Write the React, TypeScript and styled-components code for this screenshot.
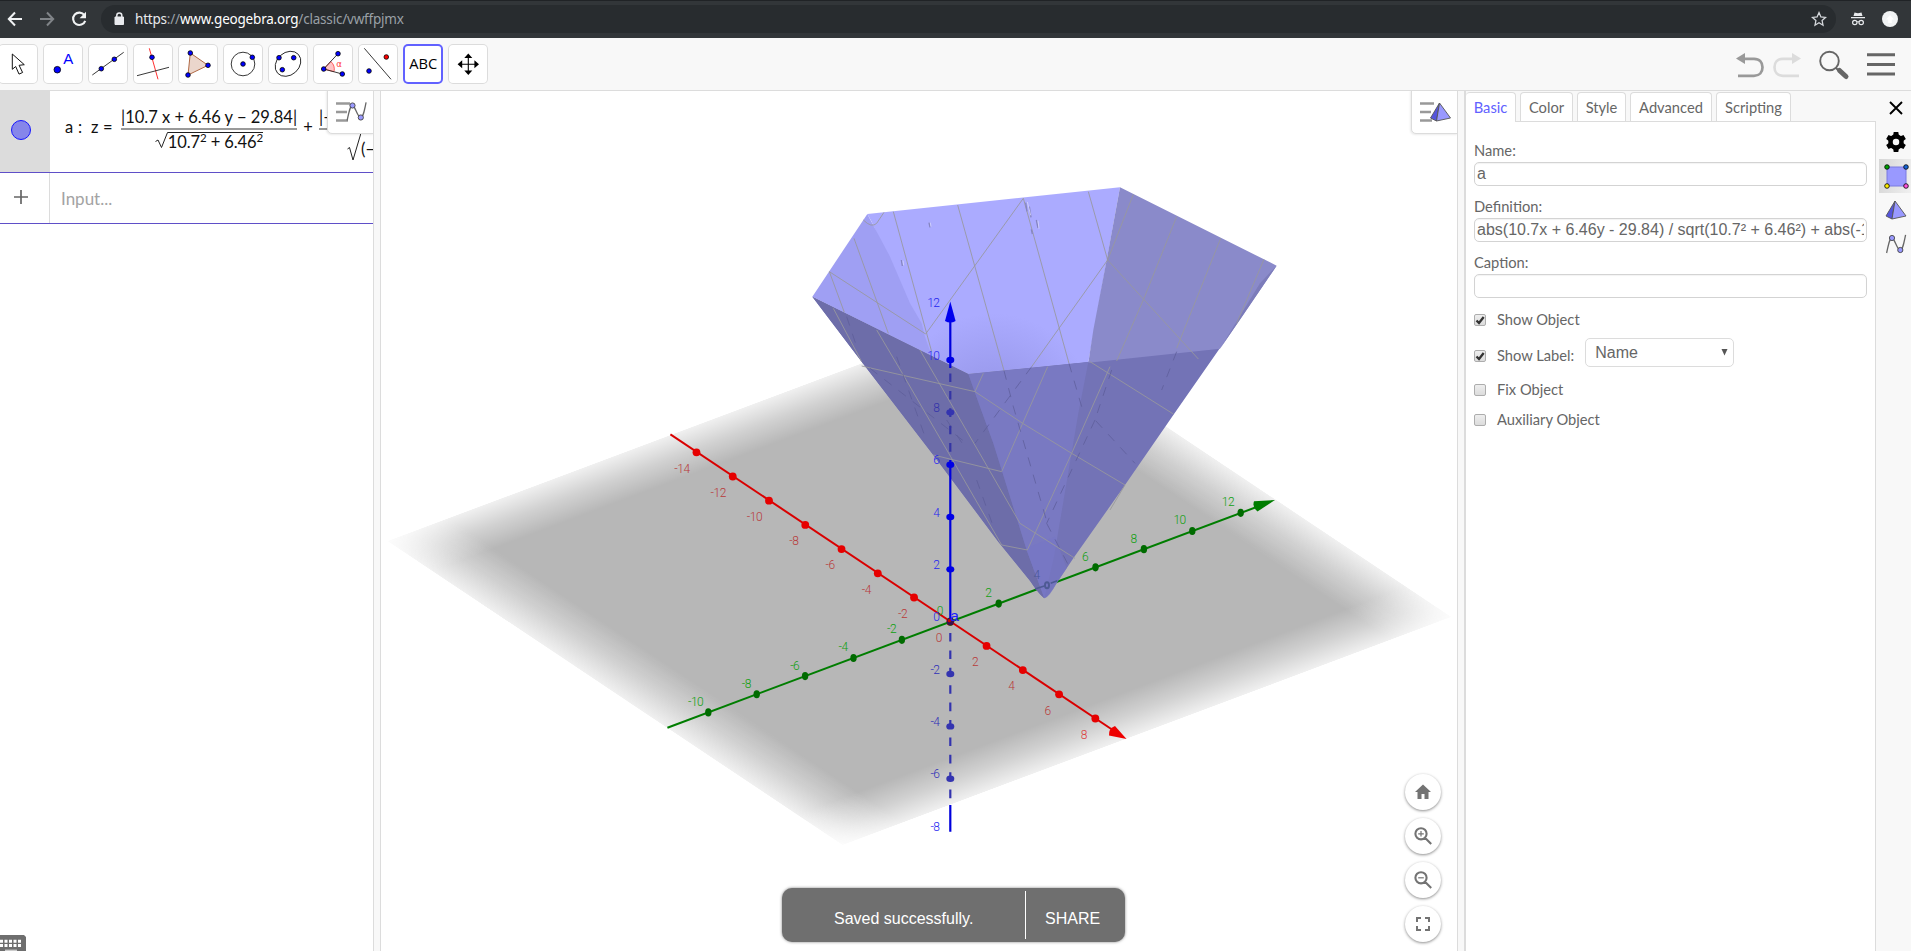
import React from "react";
import styled, { createGlobalStyle } from "styled-components";

const Global = createGlobalStyle`
  *, *::before, *::after { box-sizing: border-box; }
  html, body, #root { margin: 0; height: 100%; }
  body { overflow: hidden; background: #fff; font-family: Lato, "Liberation Sans", sans-serif; color: #666; }
  svg { display: block; }
`;

const Page = styled.div`
  display: flex;
  flex-direction: column;
  width: 1911px;
  height: 951px;
  overflow: hidden;
`;

/* Browser bar */
const BrowserBar = styled.header`
  display: flex;
  align-items: center;
  flex: none;
  height: 38px;
  padding: 0 12px 1px 7px;
  background: #323639;
  border-top: 1px solid #202326;
`;
const NavIcons = styled.div`
  display: flex;
  gap: 16px;
  width: 94px;
`;
const UrlPill = styled.div`
  display: flex;
  align-items: center;
  width: 1735px;
  height: 28px;
  padding: 0 9px 0 11px;
  border-radius: 14px;
  background: #282c2f;
`;
const UrlText = styled.span`
  flex: 1;
  margin-left: 9px;
  font: 13.5px/20px "Noto Sans", sans-serif;
  letter-spacing: -0.2px;
  color: #9aa0a6;
`;
const UrlHost = styled.span`
  color: #fff;
`;
const UrlScheme = styled.span`
  color: #e8eaed;
`;
const BrowserIcons = styled.div`
  display: flex;
  align-items: center;
  justify-content: space-between;
  width: 48px;
  margin-left: 14px;
`;

/* Toolbar */
const Toolbar = styled.nav`
  display: flex;
  justify-content: space-between;
  flex: none;
  height: 53px;
  padding: 6px 15px 0 0;
  background: #f8f8f8;
  border-bottom: 1px solid #dcdcdc;
`;
const ToolList = styled.div`
  display: flex;
  gap: 5px;
  margin-left: -2px;
`;
const ToolButton = styled.button<{ $active?: boolean }>`
  width: 40px;
  height: 40px;
  padding: 0;
  border: 0;
  border-radius: 5px;
  background: #fff;
  box-shadow: inset 0 0 0 ${(p) => (p.$active ? "2px #6161ff" : "1px #dcdcdc")};
`;
const ToolActions = styled.div`
  display: flex;
  align-items: center;
  height: 42px;
`;

/* Main area */
const Main = styled.main`
  display: flex;
  flex: 1;
  min-height: 0;
`;
const AlgebraView = styled.section`
  position: relative;
  display: flex;
  flex-direction: column;
  width: 373px;
  background: #fff;
  overflow: hidden;
`;
const AlgebraRow = styled.div<{ $height: number }>`
  display: flex;
  height: ${(p) => p.$height}px;
  border-bottom: 1px solid #5f4fc8;
`;
const Marble = styled.div<{ $filled?: boolean }>`
  flex: none;
  width: 50px;
  padding-left: 10px;
  padding-top: ${(p) => (p.$filled ? 28 : 13)}px;
  background: ${(p) => (p.$filled ? "#dcdcdc" : "#fff")};
  border-right: 1px solid #dcdcdc;
`;
const Formula = styled.div`
  display: flex;
  align-items: flex-start;
  padding: 19px 0 0 15px;
  font: 16.5px/22px Lato, sans-serif;
  color: #111;
  white-space: nowrap;
`;
const Term = styled.span<{ $width: number; $center?: boolean }>`
  flex: none;
  width: ${(p) => p.$width}px;
  padding-top: 6px;
  text-align: ${(p) => (p.$center ? "center" : "left")};
`;
const Fraction = styled.span<{ $width: number; $align?: string }>`
  display: flex;
  flex-direction: column;
  align-items: ${(p) => p.$align || "center"};
  flex: none;
  width: ${(p) => p.$width}px;
`;
const Numerator = styled.span<{ $start?: boolean }>`
  height: 20px;
  width: 100%;
  border-bottom: 2px solid #999;
  text-align: ${(p) => (p.$start ? "left" : "center")};
  line-height: 14px;
`;
const Root = styled.span`
  display: flex;
  margin-top: 2px;
`;
const Radicand = styled.span`
  height: 20px;
  border-top: 1px solid #222;
  line-height: 18px;
  letter-spacing: -0.1px;
`;
const Power = styled.sup`
  font-size: 11.5px;
  line-height: 0;
  vertical-align: 6px;
`;
const InputHint = styled.span`
  padding: 14px 0 0 11px;
  font: 17px/24px Lato, sans-serif;
  color: #a3a3a3;
`;
const StyleToggle = styled.button`
  position: absolute;
  top: -1px;
  right: -1px;
  width: 47px;
  height: 44px;
  padding: 0;
  background: #fff;
  border: 1px solid #dcdcdc;
  border-radius: 0 0 0 5px;
  box-shadow: -1px 1px 2px rgba(0, 0, 0, 0.08);
`;
const KeyboardButton = styled.div`
  position: absolute;
  left: 0;
  bottom: 0;
`;
const Splitter = styled.div<{ $end: number }>`
  flex: none;
  width: ${(p) => 7 + p.$end}px;
  background: #f8f8f8;
  border-left: 1px solid #dcdcdc;
  border-right: ${(p) => p.$end}px solid #dcdcdc;
`;

const GraphicsView = styled.section`
  position: relative;
  width: 1076px;
  background: #fff;
  overflow: hidden;
`;
const ZoomButtons = styled.div`
  position: absolute;
  right: 16px;
  bottom: 9px;
  display: flex;
  flex-direction: column;
  gap: 8px;
`;
const RoundButton = styled.button`
  display: flex;
  align-items: center;
  justify-content: center;
  width: 36px;
  height: 36px;
  padding: 0;
  border: 0;
  border-radius: 50%;
  background: #fff;
  box-shadow: 0 1px 3px rgba(0, 0, 0, 0.45);
`;
const Snackbar = styled.div`
  position: absolute;
  left: 401px;
  bottom: 9px;
  display: flex;
  align-items: center;
  width: 343px;
  height: 54px;
  border-radius: 10px;
  background: #6f6f6f;
  box-shadow: 0 0 3px rgba(0, 0, 0, 0.5);
  color: #fff;
  font: 16px/18px "Liberation Sans", sans-serif;
`;
const SnackMessage = styled.span`
  width: 244px;
  height: 48px;
  padding: 19px 0 0 52px;
  border-right: 1px solid #fff;
`;
const SnackAction = styled.span`
  padding: 8px 0 0 19px;
`;

/* Properties */
const Properties = styled.aside`
  display: flex;
  flex: 1;
  background: #f8f8f8;
`;
const PropertyColumn = styled.div`
  display: flex;
  flex-direction: column;
  width: 410px;
`;
const Tabs = styled.div`
  display: flex;
  gap: 4px;
  height: 31px;
  padding-top: 1px;
  margin-bottom: -1px;
`;
const Tab = styled.div<{ $width: number; $active?: boolean }>`
  position: relative;
  width: ${(p) => p.$width}px;
  height: ${(p) => (p.$active ? 30 : 29)}px;
  border: 1px solid #dcdcdc;
  border-bottom: 0;
  border-left-width: ${(p) => (p.$active ? 0 : 1)}px;
  border-radius: 4px 4px 0 0;
  background: #fff;
  color: ${(p) => (p.$active ? "#6161ff" : "#666")};
  font-size: 14.7px;
  line-height: 28px;
  text-align: center;
`;
const PropertyForm = styled.div`
  flex: 1;
  display: flex;
  flex-direction: column;
  background: #fff;
  border-top: 1px solid #dcdcdc;
  border-right: 1px solid #dcdcdc;
  padding: 17px 8px 0 8px;
  font-size: 14.7px;
`;
const Field = styled.label`
  display: flex;
  flex-direction: column;
  height: 56px;
  line-height: 22px;
`;
const FieldBox = styled.span`
  height: 24px;
  margin-top: 1px;
  border: 1px solid #d3d3d3;
  border-radius: 5px;
  padding: 0 2px;
  box-shadow: inset 0 1px 1px rgba(0, 0, 0, 0.05);
  font: 16px/22px "Liberation Sans", sans-serif;
  white-space: nowrap;
  overflow: hidden;
`;
const FieldClip = styled.span`
  display: block;
  overflow: hidden;
`;
const Check = styled.label<{ $height: number }>`
  display: flex;
  align-items: center;
  height: ${(p) => p.$height}px;
`;
const CheckBox = styled.span`
  width: 12px;
  height: 12px;
  margin: 1px 11px 0 0;
  border: 1px solid #adadad;
  border-radius: 2px;
  background: linear-gradient(#eee, #dcdcdc);
`;
const Select = styled.span`
  display: flex;
  justify-content: space-between;
  width: 149px;
  height: 29px;
  margin: -5px 0 0 11px;
  padding: 0 4px 0 9px;
  border: 1px solid #dcdcdc;
  border-radius: 5px;
  font: 16px/27px "Liberation Sans", sans-serif;
`;
const SideIcons = styled.div`
  display: flex;
  flex-direction: column;
  width: 35px;
  padding: 0 0 0 3px;
`;
const SideItem = styled.div<{ $selected?: boolean }>`
  display: flex;
  align-items: center;
  justify-content: center;
  height: 34px;
  padding-left: 2px;
  background: ${(p) => (p.$selected ? "linear-gradient(100deg, #d6d6d6, #f0f0f0)" : "transparent")};
`;

const Dot = ({ x, y, c = "#0000ff", r = 2.3 }: { x: number; y: number; c?: string; r?: number }) => (
  <circle cx={x} cy={y} r={r} fill={c} stroke="#000" strokeWidth="0.8" />
);

const thin = { fill: "none", stroke: "#222", strokeWidth: 0.9 };

const tools: React.ReactNode[] = [
  <path d="M14.3 10v15.3l3.4-2.8 3.3 7.6 3.6-1.6-3.5-7.2 5.2-.6z" fill="#fff" stroke="#111" />,
  <>
    <Dot x={14.3} y={25.7} r={3.3} />
    <text x="25.3" y="20" fill="#0000ff" fontFamily="Liberation Sans" fontSize="15" textAnchor="middle">A</text>
  </>,
  <>
    <path d="M4.3 31 35.7 8.3" {...thin} />
    <Dot x={13.3} y={24.7} />
    <Dot x={26.3} y={15.3} />
  </>,
  <>
    <path d="M16.3 4.3 25 35.3" fill="none" stroke="#ff3030" />
    <path d="M4 31.7 36 23.3" {...thin} />
    <Dot x={19} y={13.3} />
  </>,
  <>
    <path d="M12.3 9 30 21.3 10 31z" fill="#ebd6cc" stroke="#a85a32" strokeWidth="0.9" />
    <Dot x={12.3} y={9} />
    <Dot x={30} y={21.3} />
    <Dot x={10} y={31} />
  </>,
  <>
    <circle cx="20" cy="20" r="11.8" {...thin} />
    <Dot x={20} y={20} />
    <Dot x={29.3} y={13.3} />
  </>,
  <>
    <ellipse cx="20" cy="19.8" rx="14" ry="11.2" transform="rotate(-42 20 19.8)" {...thin} />
    <Dot x={11} y={13.7} />
    <Dot x={25.7} y={13.7} />
    <Dot x={14.3} y={25.7} />
  </>,
  <>
    <path d="M10.7 25 17.8 17.5A10.5 10.5 0 0 1 21 27.7z" fill="#ffc4c4" stroke="#ff4040" strokeWidth="0.8" />
    <path d="M25 9.7 10.7 25 29.3 30" {...thin} />
    <Dot x={10.7} y={25} />
    <Dot x={25} y={9.7} />
    <Dot x={29.3} y={30} />
    <text x="26" y="23" fill="#ff3b3b" fontFamily="DejaVu Sans" fontSize="8.5" textAnchor="middle">α</text>
  </>,
  <>
    <path d="M6.3 4.3 33 35.3" {...thin} />
    <Dot x={11} y={27} />
    <Dot x={28.3} y={13} c="#ff0000" />
  </>,
  <text x="20.2" y="25" fill="#000" fontFamily="Open Sans" fontSize="14.5" textLength="28" lengthAdjust="spacingAndGlyphs" textAnchor="middle">ABC</text>,
  <>
    <path d="M20.3 12v16M12 20.2h16.6" stroke="#000" strokeWidth="1.1" />
    <path d="M20.3 9.500l4 4.600h-8zM20.300 31l4-4.600h-8zM9.600 20.200l4.600-4v8zM31 20.200l-4.600-4v8z" />
  </>,
];

const Pyramid = () => (
  <g strokeLinejoin="round" stroke="#555" strokeWidth="0.9">
    <path d="M9 0 0 15 6 18z" fill="#5555dd" />
    <path d="M9 0 6 18 20 15z" fill="#9999ff" />
  </g>
);

const Curve = () => (
  <g>
    <path d="M.6 19C2.4 11 3.500 4 6 4S11 16 14 16 18 8 19.600.8" fill="none" stroke="#666" strokeWidth="1.3" />
    <circle cx="6" cy="4" r="2.600" fill="#9999ff" stroke="#444" strokeWidth="0.9" />
    <circle cx="14.300" cy="16" r="2.600" fill="#9999ff" stroke="#444" strokeWidth="0.9" />
  </g>
);

const OX = 950.3;
const OY = 621.7;
const redTicks = [-14, -12, -10, -8, -6, -4, -2, 0, 2, 4, 6, 8];
const greenTicks = [-10, -8, -6, -4, -2, 0, 2, 4, 6, 8, 10, 12];
const blueTicks = [-8, -6, -4, -2, 0, 2, 4, 6, 8, 10, 12];

const TickLabel = styled.text`
  font-family: Roboto, sans-serif;
  font-size: 12px;
  font-weight: 300;
  letter-spacing: -0.5px;
`;

const Scene = () => (
  <svg width="1076" height="860" viewBox="381 91 1076 860">
    <defs>
      <linearGradient id="fadeU">
        <stop offset="0" stopColor="#b7b7b7" stopOpacity="0.2" />
        <stop offset="0.05" stopColor="#b7b7b7" stopOpacity="0.64" />
        <stop offset="0.1" stopColor="#b7b7b7" />
        <stop offset="0.9" stopColor="#b7b7b7" />
        <stop offset="0.95" stopColor="#b7b7b7" stopOpacity="0.64" />
        <stop offset="1" stopColor="#b7b7b7" stopOpacity="0.2" />
      </linearGradient>
      <linearGradient id="fadeV" x1="0" y1="0" x2="0" y2="1">
        <stop offset="0" stopColor="#fff" stopOpacity="0.2" />
        <stop offset="0.05" stopColor="#fff" stopOpacity="0.64" />
        <stop offset="0.1" stopColor="#fff" />
        <stop offset="0.9" stopColor="#fff" />
        <stop offset="0.95" stopColor="#fff" stopOpacity="0.64" />
        <stop offset="1" stopColor="#fff" stopOpacity="0.2" />
      </linearGradient>
      <mask id="maskV" maskUnits="userSpaceOnUse" x="0" y="0" width="100" height="100">
        <rect width="100" height="100" fill="url(#fadeV)" />
      </mask>
      <radialGradient id="inner" gradientUnits="userSpaceOnUse" cx="640" cy="760" r="300">
        <stop offset="0.3" stopColor="#9999ec" />
        <stop offset="1" stopColor="#ababff" />
      </radialGradient>
    </defs>

    <g transform="matrix(6.092 -2.283 4.556 3.043 387 541)">
      <rect width="100" height="100" fill="url(#fadeU)" mask="url(#maskV)" />
    </g>

    <g fill="#ee0000">
      <path d="M670.4 434.3 1115 731.5" stroke="#d90000" strokeWidth="2" />
      {redTicks.map((n) => (
        <circle key={n} cx={OX + 18.13 * n} cy={OY + 12.1 * n} r="3.9" fill="#e60000" />
      ))}
      <path d="M1126.5 739 1109 735.5Q1108.5 728.5 1115 726z" />
    </g>
    <g fill="#006b00">
      <path d="M667.4 727.7 1262 505" stroke="#007d00" strokeWidth="2" />
      {greenTicks.map((n) => (
        <ellipse key={n} cx={OX + 24.2 * n} cy={OY - 9.07 * n} rx="3.2" ry="4.1" />
      ))}
      <path d="M1275 500 1254 501.3Q1252 507 1257.5 511.5z" fill="#007d00" />
    </g>

    <g transform="translate(780 160) scale(.33333)">
      <path d="M97 410 565 642 1320 564 1180 765 1035 975 880 1195 830 1270Q805 1312 793 1315 775 1300 750 1262L655 1145 460 885 245 605z" fill="#7373b6" />
      <path d="M262 162 1020 82 925 606 565 642 440 580 385 430 275 185z" fill="url(#inner)" />
      <path d="M262 162 97 410 455 588 435 530 425 490 390 430 330 290z" fill="#9f9ff3" />
      <path d="M1020 82 1490 317 1320 566 925 608 940 510 980 300z" fill="#8a8aca" />
      <path d="M1490 317 1440 370 1320 566 1385 472z" fill="#7c7cba" />
      <path d="M97 410 565 642 600 740 640 850 740 1170 793 1315Q775 1300 750 1262L655 1145 460 885 245 605z" fill="#6d6da9" />
      <path d="M565 642 925 606 895 760 822 1190 793 1315 740 1170 640 850 600 740z" fill="#7979c2" />
      <path d="M738 1165 793 1315Q810 1310 830 1268L860 1225 825 1130z" fill="#7676c4" fillOpacity=".6" />
      <g fill="none" stroke="#98989c" strokeWidth="2.6">
        <path d="M340 155 455 575M533 135 672 632M730 115 867 610M925 95 983 300M730 115 437 522 148 335M983 300 755 620M983 300 1255 597M1060 103 983 300M1190 170 1092 415 1010 603M1322 235 1190 565M1452 298 1370 490M250 180Q275 205 290 190L312 157M222 235 325 520M148 335 193 457" />
        <path d="M160 445 245 605M290 510 370 645 512 890 665 1155M420 570 475 665 720 1090 885 1195M245 618 585 695 728 790 875 880 1035 975 990 1050M460 885 665 935 728 790 803 620M665 1155 742 1170 875 880 990 620M585 695 610 640M1180 762 930 605" />
      </g>
      <g fill="none" stroke="#5b5b96" strokeOpacity=".8" strokeWidth="2.6" strokeDasharray="28 26">
        <path d="M672 632 700 740 805 1100M867 610 905 740M755 620 585 850M995 630 945 780 1065 910M945 780 800 1090M270 625 560 850M350 590 435 830M1190 575 1145 690M200 470 230 560M500 780 560 870M590 960 640 1100M800 1090 865 1215" />
      </g>
      <path d="M737 128l4 26M748 140l5 32M769 180l5 24M754 208l3 14M364 300l3 18M447 188l3 14" stroke="#8585c0" strokeWidth="4" fill="none" />
      <path d="M742 126l10 40M774 182l3 24M369 302l2 14M451 188l2 12" stroke="#d5d5fa" strokeWidth="2.5" fill="none" />
      <ellipse cx="801" cy="1276" rx="6" ry="9" fill="none" stroke="#4e5a94" strokeWidth="6" />
      <path d="M765 1287 793 1278M812 1270 832 1262" stroke="#4e5a94" strokeWidth="5" />
    </g>

    <g stroke="#0000dd" strokeWidth="2.2">
      <path d="M950.3 318V368M950.3 460V621.7M950.3 805V831.7" />
      <path d="M950.3 373.5V455" stroke="#3535a5" strokeDasharray="8.6 8.8" />
      <path d="M950.3 633V805" stroke="#3333ae" strokeDasharray="8.6 8.8" />
    </g>
    <path d="M950.3 301.5 955.6 321Q950.3 324 945 321z" fill="#0000ee" />
    {blueTicks.filter((n) => n > -8 && n < 12 && n !== 0).map((n) => (
      <ellipse key={n} cx={OX} cy={OY - 26.17 * n} rx="4" ry="3.2" fill={n < 0 || n === 8 ? "#3434b0" : "#0000e6"} />
    ))}
    <circle cx={OX} cy={OY} r="3.6" fill="#3a1050" />
    <circle cx={OX - 1} cy={OY - 1} r="1.6" fill="#d00000" />

    {redTicks.map((n) => (
      <TickLabel key={n} x={OX + 18.13 * n - (n < -9 ? 14.5 : 11.4)} y={OY + 12.1 * n + 20.2} textAnchor="middle" fill={n === 8 ? "#dc3c3c" : "#b83a3a"}>{n}</TickLabel>
    ))}
    {greenTicks.map((n) => (
      <TickLabel key={n} x={OX + 24.2 * n - (Math.abs(n) > 9 ? 12.7 : 10.4)} y={OY - 9.07 * n - 6.6} textAnchor="middle" fill={n === 4 ? "#4a5896" : "#0f9f0f"}>{n}</TickLabel>
    ))}
    {blueTicks.map((n) => (
      <TickLabel key={n} x={939.5} y={OY - 26.17 * n - 0.3} textAnchor="end" fill={n === 8 ? "#3333aa" : n < 0 && n > -8 ? "#3030b8" : "#2626f0"}>{n}</TickLabel>
    ))}
    <text x="950.3" y="621.2" fill="#2020ff" fontFamily="Liberation Sans" fontSize="15.5">a</text>
  </svg>
);

const Lines = () => <path d="M0 1.5h14M0 10h11M0 18.5h12" stroke="#999" strokeWidth="2.4" />;

const tabs: [string, number][] = [["Basic", 50], ["Color", 53], ["Style", 49], ["Advanced", 82], ["Scripting", 75]];

const CheckItem = ({ label, height, checked, children }: { label: string; height: number; checked?: boolean; children?: React.ReactNode }) => (
  <Check $height={height}>
    <CheckBox>
      {checked && (
        <svg width="10" height="10" viewBox="0 0 10 10"><path d="M1.5 5.5 4 8 8.7 2" fill="none" stroke="#333" strokeWidth="2.3" /></svg>
      )}
    </CheckBox>
    {label}
    {children}
  </Check>
);

export default function App() {
  return (
    <Page>
      <Global />
      <BrowserBar>
        <NavIcons>
          <svg width="16" height="16" viewBox="0 0 16 16"><path d="M15 8H2M8 1.5 1.8 8 8 14.5" fill="none" stroke="#f1f3f4" strokeWidth="2" /></svg>
          <svg width="16" height="16" viewBox="0 0 16 16"><path d="M1 8h13M8 1.5 14.2 8 8 14.5" fill="none" stroke="#808488" strokeWidth="2" /></svg>
          <svg width="16" height="16" viewBox="0 0 16 16"><path d="M13.4 4.2A6.2 6.2 0 1 0 14.2 9.8" fill="none" stroke="#f1f3f4" strokeWidth="2.1" /><path d="M15 .8v6.4H8.6z" fill="#f1f3f4" /></svg>
        </NavIcons>
        <UrlPill>
          <svg width="14" height="14" viewBox="0 0 14 14"><path d="M3 5h8.5v7.5H3z" fill="#e8eaed" stroke="#e8eaed" /><path d="M4.8 5V3.4a2.5 2.5 0 0 1 5 0V5" fill="none" stroke="#e8eaed" strokeWidth="1.5" /></svg>
          <UrlText>
            <UrlScheme>https</UrlScheme>://<UrlHost>www.geogebra.org</UrlHost>/classic/vwffpjmx
          </UrlText>
          <svg width="16" height="16" viewBox="0 0 16 16"><path d="m8 1.6 1.9 4.3 4.6.5-3.4 3.1.9 4.7L8 11.8l-4 2.4.9-4.7L1.5 6.4l4.6-.5z" fill="none" stroke="#d5d8dc" strokeWidth="1.3" /></svg>
        </UrlPill>
        <BrowserIcons>
          <svg width="16" height="16" viewBox="0 0 16 16"><path d="M4.5 1.5 8 2.2l3.5-.7L12.5 5h-9zM1 6h14v1.3H1z" fill="#e8eaed" /><circle cx="4.8" cy="11.5" r="2.2" fill="none" stroke="#e8eaed" strokeWidth="1.2" /><circle cx="11.2" cy="11.5" r="2.2" fill="none" stroke="#e8eaed" strokeWidth="1.2" /><path d="M7 11q1-.8 2 0" stroke="#e8eaed" fill="none" /></svg>
          <svg width="16" height="16" viewBox="0 0 16 16"><circle cx="8" cy="8" r="8" fill="#f1f3f4" /><path d="m8 4 4 4.5H9.800V12H6.200V8.500H4z" fill="#fff" /></svg>
        </BrowserIcons>
      </BrowserBar>

      <Toolbar>
        <ToolList>
          {tools.map((icon, i) => (
            <ToolButton key={i} $active={i === 9}>
              <svg width="40" height="40" viewBox="0 0 40 40">{icon}</svg>
            </ToolButton>
          ))}
        </ToolList>
        <ToolActions>
          <svg width="164" height="42" viewBox="1732 44 164 42">
            <g fill="none" strokeWidth="2.7">
              <path d="M1742 58.8h12c5.5 0 8.5 3.5 8.5 8.5s-3 8.5-8.5 8.5h-16" stroke="#999" />
              <path d="M1795 58.8h-12c-5.5 0-8.5 3.5-8.5 8.5s3 8.5 8.5 8.5h16" stroke="#dcdcdc" />
            </g>
            <path d="m1736 58.5 9-5.5v11z" fill="#999" />
            <path d="m1801 58.5-9-5.5v11z" fill="#dcdcdc" />
            <circle cx="1829.5" cy="61" r="9.3" fill="none" stroke="#666" strokeWidth="1.9" />
            <path d="m1836 68 4 4" stroke="#666" strokeWidth="2" />
            <path d="m1839.5 70.5 6.5 6" stroke="#666" strokeWidth="5" strokeLinecap="round" />
            <path d="M1867 54.7h28M1867 64.4h28M1867 74h28" stroke="#666" strokeWidth="3" />
          </svg>
        </ToolActions>
      </Toolbar>

      <Main>
        <AlgebraView>
          <AlgebraRow $height={82}>
            <Marble $filled>
              <svg width="22" height="22" viewBox="0 0 22 22"><circle cx="11" cy="11" r="9.5" fill="#8686ea" stroke="#1616ff" /></svg>
            </Marble>
            <Formula>
              <Term $width={13}>a</Term>
              <Term $width={13}>:</Term>
              <Term $width={12}>z</Term>
              <Term $width={18}>=</Term>
              <Fraction $width={176}>
                <Numerator>|10.7 x + 6.46 y − 29.84|</Numerator>
                <Root>
                  <svg width="13" height="18" viewBox="0 0 13 18"><path d="M.5 9.5 3 8 6.5 15.5 12.5.5h.5" fill="none" stroke="#222" /></svg>
                  <Radicand>10.7<Power>2</Power> + 6.46<Power>2</Power></Radicand>
                </Root>
              </Fraction>
              <Term $width={22} $center>+</Term>
              <Fraction $width={60} $align="flex-end">
                <Numerator $start>|−10.7</Numerator>
                <Root>
                  <svg width="14" height="30" viewBox="0 0 14 30"><path d="M.5 17 2.5 15.5 6 28 14 1" fill="none" stroke="#222" /></svg>
                  <Term $width={18}>(−</Term>
                </Root>
              </Fraction>
            </Formula>
          </AlgebraRow>
          <AlgebraRow $height={51}>
            <Marble>
              <svg width="22" height="22" viewBox="0 0 22 22"><path d="M11 4v14M4 11h14" stroke="#666" strokeWidth="1.7" /></svg>
            </Marble>
            <InputHint>Input...</InputHint>
          </AlgebraRow>
          <StyleToggle>
            <svg width="44" height="42" viewBox="0 0 44 42"><g transform="translate(8 11)"><Lines /></g><g transform="translate(18.5 10.5)"><Curve /></g></svg>
          </StyleToggle>
          <KeyboardButton>
            <svg width="26" height="16" viewBox="0 0 26 16"><path d="M0 0h24l2 2v14H0z" fill="#6e6e6e" /><path d="M0 6.2h22M0 10.6h22" stroke="#fff" strokeWidth="3" strokeDasharray="3 1.5" /><path d="M5 15.3h12" stroke="#ccc" strokeWidth="1.4" /></svg>
          </KeyboardButton>
        </AlgebraView>
        <Splitter $end={1} />

        <GraphicsView>
          <Scene />
          <StyleToggle>
            <svg width="44" height="42" viewBox="0 0 44 42"><g transform="translate(8 11)"><Lines /></g><g transform="translate(18.5 12)"><Pyramid /></g></svg>
          </StyleToggle>
          <ZoomButtons>
            <RoundButton><svg width="18" height="18" viewBox="0 0 18 18"><path d="M9 1.5 1 9h2.500v7h4v-5h3v5h4V9H17z" fill="#737373" /></svg></RoundButton>
            <RoundButton><svg width="20" height="20" viewBox="0 0 20 20"><path d="M8 2.2a5.6 5.6 0 1 0 0 11.2 5.6 5.6 0 0 0 0-11.2M12.2 12l6 6" fill="none" stroke="#737373" strokeWidth="2.1" /><path d="M8 5v5.6M5.2 7.8h5.6" stroke="#737373" strokeWidth="1.2" /></svg></RoundButton>
            <RoundButton><svg width="20" height="20" viewBox="0 0 20 20"><path d="M8 2.2a5.6 5.6 0 1 0 0 11.2 5.6 5.6 0 0 0 0-11.2M12.2 12l6 6" fill="none" stroke="#737373" strokeWidth="2.1" /><path d="M5.2 7.8h5.6" stroke="#737373" strokeWidth="1.2" /></svg></RoundButton>
            <RoundButton><svg width="14" height="14" viewBox="0 0 14 14"><path d="M1 5V1h4M9 1h4v4M13 9v4H9M5 13H1V9" fill="none" stroke="#737373" strokeWidth="2" /></svg></RoundButton>
          </ZoomButtons>
          <Snackbar>
            <SnackMessage>Saved successfully.</SnackMessage>
            <SnackAction>SHARE</SnackAction>
          </Snackbar>
        </GraphicsView>
        <Splitter $end={2} />

        <Properties>
          <PropertyColumn>
            <Tabs>
              {tabs.map(([name, width], i) => (
                <Tab key={name} $width={width} $active={i === 0}>{name}</Tab>
              ))}
            </Tabs>
            <PropertyForm>
              <Field>Name:<FieldBox>a</FieldBox></Field>
              <Field>Definition:<FieldBox><FieldClip>abs(10.7x + 6.46y - 29.84) / sqrt(10.7² + 6.46²) + abs(-10.7x</FieldClip></FieldBox></Field>
              <Field>Caption:<FieldBox /></Field>
              <CheckItem label="Show Object" height={24} checked />
              <CheckItem label="Show Label:" height={48} checked>
                <Select>Name<svg width="9" height="27" viewBox="0 0 9 27"><path d="M1.5 10h6L4.5 16.5z" fill="#555" /></svg></Select>
              </CheckItem>
              <CheckItem label="Fix Object" height={20} />
              <CheckItem label="Auxiliary Object" height={40} />
            </PropertyForm>
          </PropertyColumn>
          <SideIcons>
            <SideItem><svg width="14" height="14" viewBox="0 0 14 14"><path d="m1 1 12 12M13 1 1 13" stroke="#000" strokeWidth="1.9" /></svg></SideItem>
            <SideItem>
              <svg width="20" height="20" viewBox="0 0 20 20">
                <circle cx="10" cy="10" r="5.5" fill="none" stroke="#000" strokeWidth="4.5" />
                {[0, 60, 120, 180, 240, 300].map((a) => (
                  <path key={a} d="M7 4.500 7.700 0h4.600l.7 4.500z" transform={`rotate(${a} 10 10)`} />
                ))}
              </svg>
            </SideItem>
            <SideItem $selected>
              <svg width="25" height="25" viewBox="0 0 25 25">
                <path d="M3 3h19v19H3z" fill="#9999ff" stroke="#7b7be0" />
                <Dot x={3} y={3} c="#00a000" />
                <Dot x={22} y={3} c="#1565d8" />
                <Dot x={3} y={22} c="#ffee00" />
                <Dot x={22} y={22} c="#ff55dd" />
              </svg>
            </SideItem>
            <SideItem><svg width="22" height="20" viewBox="-1 -1 22 20"><Pyramid /></svg></SideItem>
            <SideItem><svg width="21" height="20" viewBox="0 0 21 20"><Curve /></svg></SideItem>
          </SideIcons>
        </Properties>
      </Main>
    </Page>
  );
}
